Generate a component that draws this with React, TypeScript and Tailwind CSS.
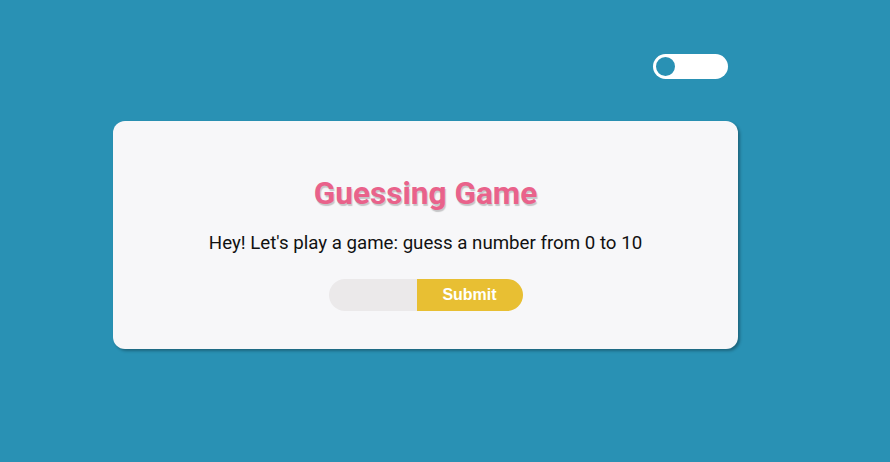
export default function App() {
  return (
    <div className="min-h-screen w-full bg-[#2991b4] pt-[54px] pl-[113px] font-['Roboto',sans-serif]">
      <div className="w-[625px]">
        <div className="flex justify-end pr-[10px]">
          <button className="flex h-[25px] w-[75px] items-center rounded-full bg-white p-[1px]">
            <span className="h-[23px] w-[23px] rounded-full border-2 border-white bg-[#2991b4]" />
          </button>
        </div>
        <div className="mt-[42px] flex h-[228px] flex-col items-center rounded-xl bg-[#f7f7f9] pt-[54px] shadow-[2px_2px_3px_rgba(0,0,0,0.3)]">
          <h1 className="text-[31.6px] font-bold leading-[38px] text-[#e9628b] [text-shadow:1px_2px_1px_rgba(0,0,0,0.2)]">
            Guessing Game
          </h1>
          <p className="mt-[16px] text-[18.7px] leading-[28px] text-[#111]">
            Hey! Let's play a game: guess a number from 0 to 10
          </p>
          <div className="mt-[22px] flex h-[32px] overflow-hidden rounded-full">
            <input className="h-full w-[88px] bg-[#ebe9ea] px-3 outline-none" />
            <button className="h-full w-[106px] bg-[#e8bf33] font-['Liberation_Sans',sans-serif] text-[16px] font-bold text-white">
              Submit
            </button>
          </div>
        </div>
      </div>
    </div>
  );
}
